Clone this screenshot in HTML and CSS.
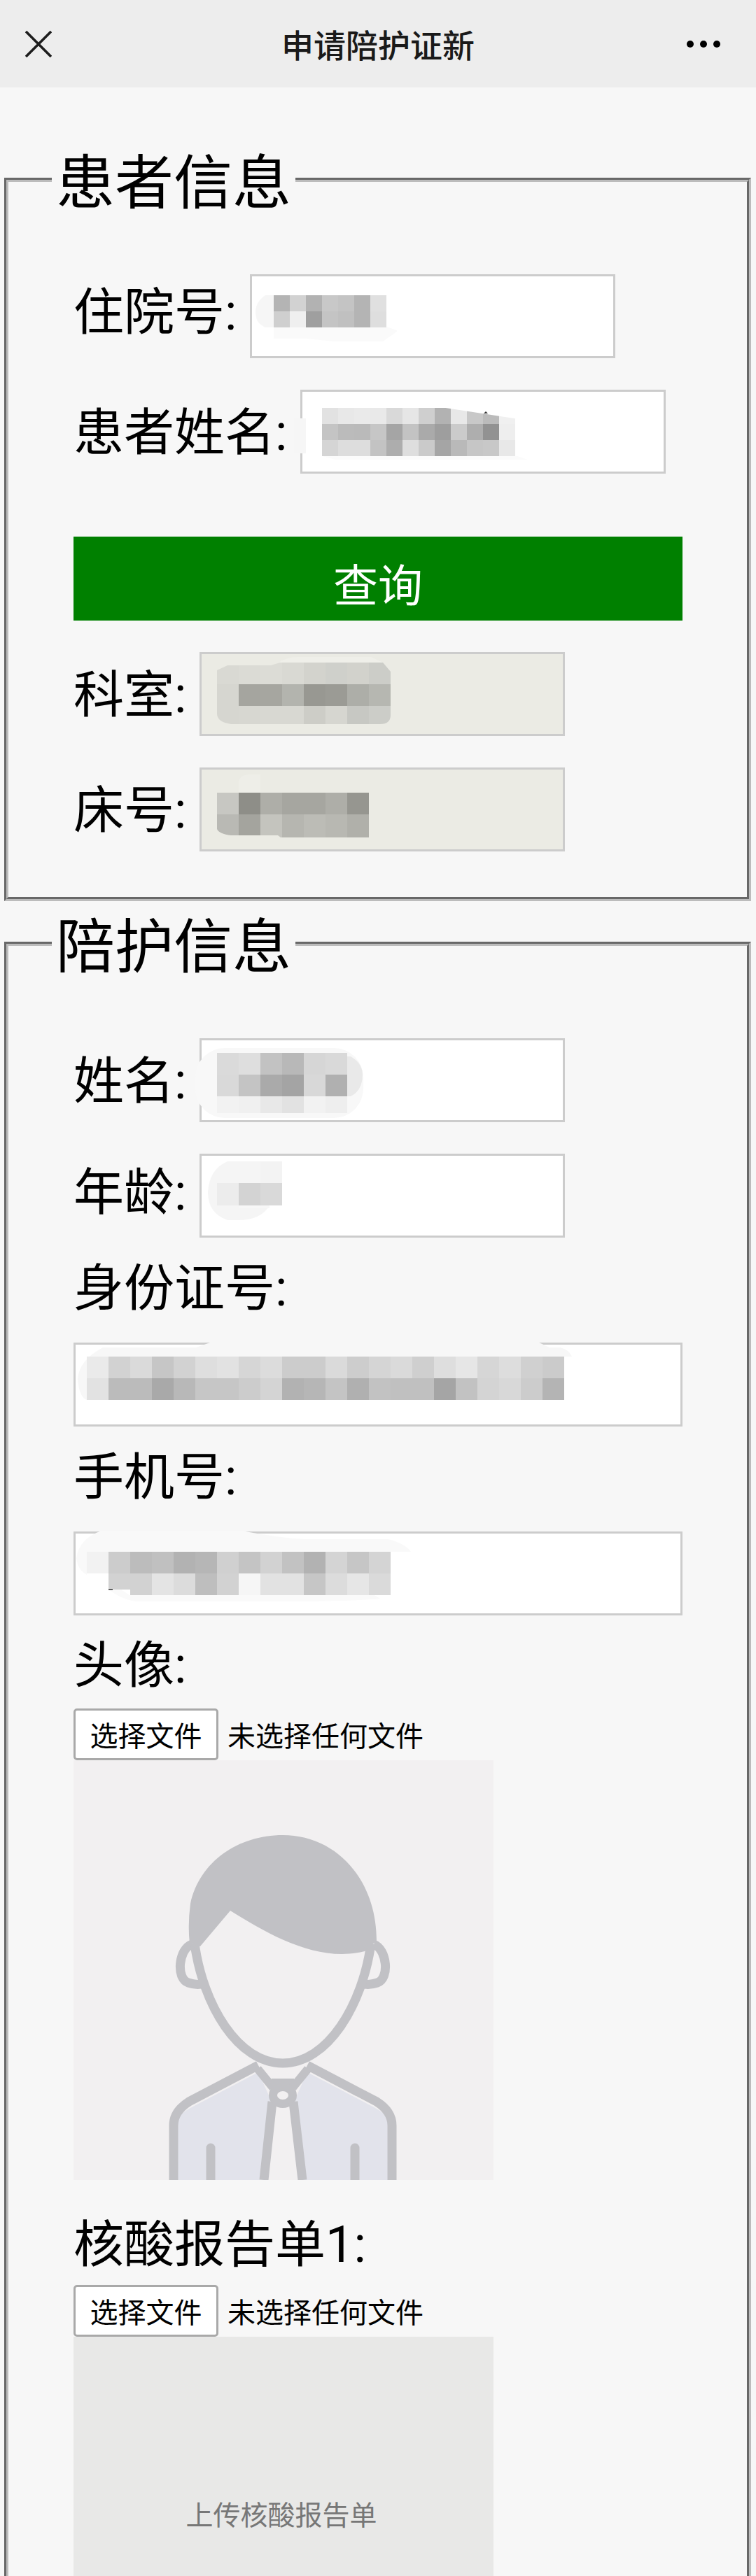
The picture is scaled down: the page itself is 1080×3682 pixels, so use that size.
FILE: index.html
```html
<!DOCTYPE html>
<html lang="zh-CN">
<head>
    <meta charset="UTF-8">
    <meta name="viewport" content="width=device-width, initial-scale=1.0">
    <title>申请陪护证新</title>
    <link rel="stylesheet" href="styles.css">
</head>
<body>

    <header class="topbar">
        <svg class="close-icon" viewBox="0 0 38 38" width="38" height="38">
            <path d="M1 1L37 37M37 1L1 37" fill="none" stroke="#1c1c1c" stroke-width="3.6"/>
        </svg>
        <div class="topbar-title">申请陪护证新</div>
        <svg class="more-icon" viewBox="0 0 48 10" width="48" height="10">
            <circle cx="5" cy="5" r="5"/>
            <circle cx="24" cy="5" r="5"/>
            <circle cx="43" cy="5" r="5"/>
        </svg>
    </header>

    <!-- Patient info -->
    <fieldset class="panel">
        <legend>患者信息</legend>

        <div class="row row-first">
            <label class="label label-up">住院号:</label>
            <div class="input input-wide">
                <svg class="mosaic" viewBox="0 0 522 120">
                    <path d="M34 75H195L210 80V82L190 96H120L80 92H34Z" fill="#fafafa"/>
                    <path d="M34 30H22Q8 40 8 54Q8 70 22 76H34Z" fill="#f6f6f6"/>
                    <rect x="34" y="30" width="23" height="23" fill="#b4b4b4"/>
                    <rect x="57" y="30" width="23" height="23" fill="#d2d2d2"/>
                    <rect x="80" y="30" width="23" height="23" fill="#b2b2b2"/>
                    <rect x="103" y="30" width="23" height="23" fill="#c8c8c8"/>
                    <rect x="126" y="30" width="23" height="23" fill="#c4c4c4"/>
                    <rect x="149" y="30" width="23" height="23" fill="#b4b4b4"/>
                    <rect x="172" y="30" width="23" height="23" fill="#e0e0e0"/>
                    <rect x="34" y="53" width="23" height="23" fill="#cfcfcf"/>
                    <rect x="57" y="53" width="23" height="23" fill="#efefef"/>
                    <rect x="80" y="53" width="23" height="23" fill="#9f9f9f"/>
                    <rect x="103" y="53" width="23" height="23" fill="#c4c4c4"/>
                    <rect x="126" y="53" width="23" height="23" fill="#c0c0c0"/>
                    <rect x="149" y="53" width="23" height="23" fill="#b4b4b4"/>
                    <rect x="172" y="53" width="23" height="23" fill="#dedede"/>
                </svg>
            </div>
        </div>

        <div class="row">
            <label class="label">患者姓名:</label>
            <div class="input input-wide">
                <svg class="mosaic" viewBox="0 0 522 120">
                    <path d="M-9 41H8V91H-9Z" fill="#f6f6f6"/>
                    <path d="M31 95H310L325 100H50Z" fill="#fbfbfb"/>
                    <g fill="#e2e2e2">
                        <rect x="31" y="26" width="23" height="23" fill="#e2e2e2"/>
                        <rect x="54" y="26" width="23" height="23" fill="#e8e8e8"/>
                        <rect x="77" y="26" width="23" height="23" fill="#eaeaea"/>
                        <rect x="100" y="26" width="23" height="23" fill="#e9e9e9"/>
                        <rect x="123" y="26" width="23" height="23" fill="#d9d9d9"/>
                        <rect x="146" y="26" width="23" height="23" fill="#e6e6e6"/>
                        <rect x="169" y="26" width="23" height="23" fill="#cfcfcf"/>
                        <rect x="192" y="26" width="23" height="23" fill="#b2b2b2"/>
                        <rect x="215" y="26" width="23" height="23" fill="#e8e8e8"/>
                        <rect x="238" y="26" width="23" height="23" fill="#c8c8c8"/>
                        <rect x="261" y="26" width="23" height="23" fill="#bbbbbb"/>
                        <rect x="284" y="26" width="23" height="23" fill="#f0f0f0"/>
                        <rect x="31" y="49" width="23" height="23" fill="#c4c4c4"/>
                        <rect x="54" y="49" width="23" height="23" fill="#bbbbbb"/>
                        <rect x="77" y="49" width="23" height="23" fill="#bababa"/>
                        <rect x="100" y="49" width="23" height="23" fill="#c6c6c6"/>
                        <rect x="123" y="49" width="23" height="23" fill="#a5a5a5"/>
                        <rect x="146" y="49" width="23" height="23" fill="#c3c3c3"/>
                        <rect x="169" y="49" width="23" height="23" fill="#aaaaaa"/>
                        <rect x="192" y="49" width="23" height="23" fill="#9e9e9e"/>
                        <rect x="215" y="49" width="23" height="23" fill="#cbcbcb"/>
                        <rect x="238" y="49" width="23" height="23" fill="#aeaeae"/>
                        <rect x="261" y="49" width="23" height="23" fill="#929292"/>
                        <rect x="284" y="49" width="23" height="23" fill="#eeeeee"/>
                        <rect x="31" y="72" width="23" height="23" fill="#d5d5d5"/>
                        <rect x="54" y="72" width="23" height="23" fill="#dddddd"/>
                        <rect x="77" y="72" width="23" height="23" fill="#dddddd"/>
                        <rect x="100" y="72" width="23" height="23" fill="#c3c3c3"/>
                        <rect x="123" y="72" width="23" height="23" fill="#adadad"/>
                        <rect x="146" y="72" width="23" height="23" fill="#dedede"/>
                        <rect x="169" y="72" width="23" height="23" fill="#cacaca"/>
                        <rect x="192" y="72" width="23" height="23" fill="#a5a5a5"/>
                        <rect x="215" y="72" width="23" height="23" fill="#b9b9b9"/>
                        <rect x="238" y="72" width="23" height="23" fill="#c6c6c6"/>
                        <rect x="261" y="72" width="23" height="23" fill="#c8c8c8"/>
                        <rect x="284" y="72" width="23" height="23" fill="#e8e8e8"/>
                    </g>
                    <path d="M206 25.7L307 41.3V25.7Z" fill="#fff"/>
                    <path d="M262 34L265 31L268 34Z" fill="#333"/>
                </svg>
            </div>
        </div>

        <button class="query-btn">查询</button>

        <div class="row">
            <label class="label">科室:</label>
            <div class="input input-disabled">
                <svg class="mosaic" viewBox="0 0 522 120">
                    <defs>
                        <clipPath id="clipDept">
                            <path d="M25 26L40 19H102L115 15H262L273 28V90Q273 103 258 103H45Q25 100 25 88Z"/>
                        </clipPath>
                    </defs>
                    <path d="M113 15Q125 7 140 7H245L262 15Z" fill="#efefe9"/>
                    <g clip-path="url(#clipDept)">
                        <rect x="25" y="15" width="31" height="31" fill="#d9d9d3"/>
                        <rect x="56" y="15" width="31" height="31" fill="#dbdbd5"/>
                        <rect x="87" y="15" width="31" height="31" fill="#dcdcd6"/>
                        <rect x="118" y="15" width="31" height="31" fill="#d9d9d3"/>
                        <rect x="149" y="15" width="31" height="31" fill="#d3d3cd"/>
                        <rect x="180" y="15" width="31" height="31" fill="#cfd0cb"/>
                        <rect x="211" y="15" width="31" height="31" fill="#d2d2cc"/>
                        <rect x="242" y="15" width="31" height="31" fill="#cccdc8"/>
                        <rect x="25" y="46" width="31" height="31" fill="#d6d6d0"/>
                        <rect x="56" y="46" width="31" height="31" fill="#a5a59f"/>
                        <rect x="87" y="46" width="31" height="31" fill="#a6a6a0"/>
                        <rect x="118" y="46" width="31" height="31" fill="#b3b4ae"/>
                        <rect x="149" y="46" width="31" height="31" fill="#989892"/>
                        <rect x="180" y="46" width="31" height="31" fill="#9b9b95"/>
                        <rect x="211" y="46" width="31" height="31" fill="#adaea8"/>
                        <rect x="242" y="46" width="31" height="31" fill="#b6b7b1"/>
                        <rect x="25" y="77" width="31" height="26" fill="#d6d6d0"/>
                        <rect x="56" y="77" width="31" height="26" fill="#d7d7d1"/>
                        <rect x="87" y="77" width="31" height="26" fill="#d8d8d2"/>
                        <rect x="118" y="77" width="31" height="26" fill="#d8d8d2"/>
                        <rect x="149" y="77" width="31" height="26" fill="#cdcdc7"/>
                        <rect x="180" y="77" width="31" height="26" fill="#d6d6d0"/>
                        <rect x="211" y="77" width="31" height="26" fill="#c7c8c3"/>
                        <rect x="242" y="77" width="31" height="26" fill="#cccdc8"/>
                    </g>
                </svg>
            </div>
        </div>

        <div class="row">
            <label class="label">床号:</label>
            <div class="input input-disabled">
                <svg class="mosaic" viewBox="0 0 522 120">
                    <defs>
                        <clipPath id="clipBed">
                            <path d="M25 36H242V100H116L112 97H45Q28 95 25 88Z"/>
                        </clipPath>
                    </defs>
                    <path d="M56 36V20Q58 10 72 10H87V36Z" fill="#eeeee8"/>
                    <g clip-path="url(#clipBed)">
                        <rect x="25" y="36" width="31" height="31" fill="#c7c7c2"/>
                        <rect x="56" y="36" width="31" height="31" fill="#8e8e88"/>
                        <rect x="87" y="36" width="31" height="31" fill="#aeaea8"/>
                        <rect x="118" y="36" width="31" height="31" fill="#a6a6a0"/>
                        <rect x="149" y="36" width="31" height="31" fill="#a6a6a0"/>
                        <rect x="180" y="36" width="31" height="31" fill="#aeaea8"/>
                        <rect x="211" y="36" width="31" height="31" fill="#969690"/>
                        <rect x="25" y="67" width="31" height="33" fill="#b9b9b4"/>
                        <rect x="56" y="67" width="31" height="33" fill="#a4a49e"/>
                        <rect x="87" y="67" width="31" height="33" fill="#c4c4be"/>
                        <rect x="118" y="67" width="31" height="33" fill="#b6b6b0"/>
                        <rect x="149" y="67" width="31" height="33" fill="#bcbcb6"/>
                        <rect x="180" y="67" width="31" height="33" fill="#b8b8b2"/>
                        <rect x="211" y="67" width="31" height="33" fill="#b0b0aa"/>
                    </g>
                </svg>
            </div>
        </div>
    </fieldset>

    <!-- Escort info -->
    <fieldset class="panel panel-second">
        <legend>陪护信息</legend>

        <div class="row row-first">
            <label class="label">姓名:</label>
            <div class="input">
                <svg class="mosaic" viewBox="0 0 522 120">
                    <rect x="-6" y="14" width="240" height="100" rx="42" fill="#f8f8f8"/>
                    <rect x="25" y="21" width="31" height="31" fill="#dadada"/>
                    <rect x="56" y="21" width="31" height="31" fill="#dedede"/>
                    <rect x="87" y="21" width="31" height="31" fill="#c2c2c2"/>
                    <rect x="118" y="21" width="31" height="31" fill="#b8b8b8"/>
                    <rect x="149" y="21" width="31" height="31" fill="#d6d6d6"/>
                    <rect x="180" y="21" width="31" height="31" fill="#d9d9d9"/>
                    <rect x="25" y="52" width="31" height="31" fill="#d9d9d9"/>
                    <rect x="56" y="52" width="31" height="31" fill="#c4c4c4"/>
                    <rect x="87" y="52" width="31" height="31" fill="#aaaaaa"/>
                    <rect x="118" y="52" width="31" height="31" fill="#a4a4a4"/>
                    <rect x="149" y="52" width="31" height="31" fill="#d8d8d8"/>
                    <rect x="180" y="52" width="31" height="31" fill="#b0b0b0"/>
                    <path d="M211 26H216Q233 36 233 52Q233 75 216 83H211Z" fill="#e9e9e9"/>
                    <rect x="25" y="83" width="31" height="24" fill="#f2f2f2"/>
                    <rect x="56" y="83" width="31" height="24" fill="#f0f0f0"/>
                    <rect x="87" y="83" width="31" height="24" fill="#e8e8e8"/>
                    <rect x="118" y="83" width="31" height="24" fill="#e2e2e2"/>
                    <rect x="149" y="83" width="31" height="24" fill="#f2f2f2"/>
                    <rect x="180" y="83" width="31" height="24" fill="#eeeeee"/>
                </svg>
            </div>
        </div>

        <div class="row row-age">
            <label class="label label-age">年龄:</label>
            <div class="input">
                <svg class="mosaic" viewBox="0 0 522 120">
                    <path d="M40 11H118V74H100Q88 95 55 95H40Q12 85 12 55Q14 22 40 11Z" fill="#f5f5f5"/>
                    <rect x="87" y="11" width="31" height="31" fill="#f3f3f3"/>
                    <rect x="25" y="42" width="31" height="32" fill="#ececec"/>
                    <rect x="56" y="42" width="31" height="32" fill="#d3d3d3"/>
                    <rect x="87" y="42" width="31" height="32" fill="#d9d9d9"/>
                    <rect x="56" y="74" width="44" height="4" fill="#f7f7f7"/>
                </svg>
            </div>
        </div>

        <label class="label label-block">身份证号:</label>
        <div class="input input-full">
            <svg class="mosaic" viewBox="0 0 870 120">
                <path d="M198 -1H663L680 7H695Q708 10 712 20H19V82Q8 78 6 52Q8 25 42 7H175Z" fill="#f7f7f7"/>
                <rect x="19" y="20" width="31" height="31" fill="#eaeaea"/>
                <rect x="50" y="20" width="31" height="31" fill="#d2d2d2"/>
                <rect x="81" y="20" width="31" height="31" fill="#dadada"/>
                <rect x="112" y="20" width="31" height="31" fill="#c6c6c6"/>
                <rect x="143" y="20" width="31" height="31" fill="#d2d2d2"/>
                <rect x="174" y="20" width="31" height="31" fill="#dedede"/>
                <rect x="205" y="20" width="31" height="31" fill="#e2e2e2"/>
                <rect x="236" y="20" width="31" height="31" fill="#d6d6d6"/>
                <rect x="267" y="20" width="31" height="31" fill="#dcdcdc"/>
                <rect x="298" y="20" width="31" height="31" fill="#cccccc"/>
                <rect x="329" y="20" width="31" height="31" fill="#cccccc"/>
                <rect x="360" y="20" width="31" height="31" fill="#dadada"/>
                <rect x="391" y="20" width="31" height="31" fill="#cdcdcd"/>
                <rect x="422" y="20" width="31" height="31" fill="#d5d5d5"/>
                <rect x="453" y="20" width="31" height="31" fill="#dadada"/>
                <rect x="484" y="20" width="31" height="31" fill="#cfcfcf"/>
                <rect x="515" y="20" width="31" height="31" fill="#dedede"/>
                <rect x="546" y="20" width="31" height="31" fill="#e6e6e6"/>
                <rect x="577" y="20" width="31" height="31" fill="#d6d6d6"/>
                <rect x="608" y="20" width="31" height="31" fill="#dddddd"/>
                <rect x="639" y="20" width="31" height="31" fill="#d0d0d0"/>
                <rect x="670" y="20" width="31" height="31" fill="#cbcbcb"/>
                <rect x="19" y="51" width="31" height="31" fill="#e2e2e2"/>
                <rect x="50" y="51" width="31" height="31" fill="#bbbbbb"/>
                <rect x="81" y="51" width="31" height="31" fill="#bbbbbb"/>
                <rect x="112" y="51" width="31" height="31" fill="#a9a9a9"/>
                <rect x="143" y="51" width="31" height="31" fill="#b8b8b8"/>
                <rect x="174" y="51" width="31" height="31" fill="#c6c6c6"/>
                <rect x="205" y="51" width="31" height="31" fill="#c6c6c6"/>
                <rect x="236" y="51" width="31" height="31" fill="#cccccc"/>
                <rect x="267" y="51" width="31" height="31" fill="#d4d4d4"/>
                <rect x="298" y="51" width="31" height="31" fill="#b2b2b2"/>
                <rect x="329" y="51" width="31" height="31" fill="#b6b6b6"/>
                <rect x="360" y="51" width="31" height="31" fill="#c4c4c4"/>
                <rect x="391" y="51" width="31" height="31" fill="#b0b0b0"/>
                <rect x="422" y="51" width="31" height="31" fill="#c2c2c2"/>
                <rect x="453" y="51" width="31" height="31" fill="#c0c0c0"/>
                <rect x="484" y="51" width="31" height="31" fill="#c0c0c0"/>
                <rect x="515" y="51" width="31" height="31" fill="#a5a5a5"/>
                <rect x="546" y="51" width="31" height="31" fill="#c2c2c2"/>
                <rect x="577" y="51" width="31" height="31" fill="#d4d4d4"/>
                <rect x="608" y="51" width="31" height="31" fill="#d8d8d8"/>
                <rect x="639" y="51" width="31" height="31" fill="#cccccc"/>
                <rect x="670" y="51" width="31" height="31" fill="#b4b4b4"/>
            </svg>
        </div>

        <label class="label label-block">手机号:</label>
        <div class="input input-full">
            <svg class="mosaic" viewBox="0 0 870 120">
                <path d="M40 -1H240Q300 10 330 11H450Q475 18 482 29H19V62Q6 55 4 38Q8 10 40 -1Z" fill="#f9f9f9"/>
                <path d="M50 83H68L80 91H430L438 96Q400 100 300 100H90Q70 98 50 83Z" fill="#fafafa"/>
                <rect x="19" y="29" width="31" height="31" fill="#f2f2f2"/>
                <rect x="50" y="29" width="31" height="31" fill="#cccccc"/>
                <rect x="81" y="29" width="31" height="31" fill="#bcbcbc"/>
                <rect x="112" y="29" width="31" height="31" fill="#c0c0c0"/>
                <rect x="143" y="29" width="31" height="31" fill="#b2b2b2"/>
                <rect x="174" y="29" width="31" height="31" fill="#b6b6b6"/>
                <rect x="205" y="29" width="31" height="31" fill="#d0d0d0"/>
                <rect x="236" y="29" width="31" height="31" fill="#c4c4c4"/>
                <rect x="267" y="29" width="31" height="31" fill="#d2d2d2"/>
                <rect x="298" y="29" width="31" height="31" fill="#c2c2c2"/>
                <rect x="329" y="29" width="31" height="31" fill="#b2b2b2"/>
                <rect x="360" y="29" width="31" height="31" fill="#d4d4d4"/>
                <rect x="391" y="29" width="31" height="31" fill="#c6c6c6"/>
                <rect x="422" y="29" width="31" height="31" fill="#d4d4d4"/>
                <rect x="50" y="60" width="31" height="23" fill="#d2d2d2"/>
                <rect x="81" y="60" width="31" height="31" fill="#d2d2d2"/>
                <rect x="112" y="60" width="31" height="31" fill="#e4e4e4"/>
                <rect x="143" y="60" width="31" height="31" fill="#dcdcdc"/>
                <rect x="174" y="60" width="31" height="31" fill="#bebebe"/>
                <rect x="205" y="60" width="31" height="31" fill="#d2d2d2"/>
                <rect x="236" y="60" width="31" height="31" fill="#f6f6f6"/>
                <rect x="267" y="60" width="31" height="31" fill="#e2e2e2"/>
                <rect x="298" y="60" width="31" height="31" fill="#e2e2e2"/>
                <rect x="329" y="60" width="31" height="31" fill="#c6c6c6"/>
                <rect x="360" y="60" width="31" height="31" fill="#dcdcdc"/>
                <rect x="391" y="60" width="31" height="31" fill="#e6e6e6"/>
                <rect x="422" y="60" width="31" height="31" fill="#dadada"/>
                <rect x="50" y="82" width="6" height="1.5" fill="#333"/>
            </svg>
        </div>

        <label class="label label-block label-short">头像:</label>
        <div class="file-row">
            <button class="file-btn">选择文件</button>
            <span class="file-name">未选择任何文件</span>
        </div>
        <div class="avatar">
            <svg viewBox="0 0 600 600" width="600" height="600">
                <!-- shirt -->
                <path d="M264 446L167 497Q143 510 143 528V600H271L284 490ZM334 446L431 497Q455 510 455 528V600H327L314 490Z" fill="#e2e3eb"/>
                <g fill="none" stroke="#c1c1c5" stroke-width="13">
                    <!-- ears -->
                    <path d="M169 263C150 270 146 312 164 318C170 320 176 321 182 320"/>
                    <path d="M429 263C448 270 452 312 434 318C428 320 422 321 416 320"/>
                    <!-- face -->
                    <path d="M173 262C185 350 235 433 299 433C363 433 413 350 425 262"/>
                    <!-- shoulders -->
                    <path d="M264 436L165 488Q143 502 143 522V600"/>
                    <path d="M334 436L433 488Q455 502 455 522V600"/>
                    <!-- collar -->
                    <path d="M263 441L285 468M335 441L313 468M283 461H315" stroke-width="12"/>
                    <!-- tie -->
                    <ellipse cx="299" cy="479" rx="14" ry="12" stroke-width="12"/>
                    <path d="M284 488L272 600M314 488L327 600"/>
                    <!-- arms -->
                    <path d="M196 600V554M402 600V554" stroke-linecap="round"/>
                </g>
                <!-- hair -->
                <path d="M166 262Q163 235 167 205C180 145 235 107 299 107C375 107 433 170 433 258L416 273C350 290 280 250 224 215L181 266Z" fill="#c1c1c5"/>
            </svg>
        </div>

        <label class="label label-block label-report">核酸报告单1:</label>
        <div class="file-row">
            <button class="file-btn">选择文件</button>
            <span class="file-name">未选择任何文件</span>
        </div>
        <div class="report-img">上传核酸报告单</div>
    </fieldset>

</body>
</html>
```

FILE: styles.css
```css
html,
body {
    margin: 0;
    padding: 0;
    height: 3682px;
    overflow: hidden;
}

body {
    background-color: #f7f7f7;
    color: #000;
    font-family: Roboto, "Noto Sans CJK SC", sans-serif;
}

.topbar {
    display: grid;
    grid-template-columns: 1fr auto 1fr;
    align-items: center;
    height: 125px;
    background-color: #ededed;
}

.close-icon {
    justify-self: start;
    margin-left: 36px;
}

.more-icon {
    justify-self: end;
    margin-right: 51px;
}

.topbar-title {
    margin-bottom: 2px;
    font-size: 46px;
    font-weight: 500;
    color: #1a1a1a;
}

.panel {
    margin: 78px 7px 0 6px;
    padding: 0 92px 65px 93px;
    min-width: 0;
    border: 6px groove #bcbcbc;
}

.panel-second {
    margin-top: 7px;
}

.panel legend {
    margin-left: -31px;
    padding: 12px 6px 0;
    font-size: 84px;
    line-height: 96px;
}

.row {
    display: flex;
    align-items: center;
    margin-top: 45px;
}

.row-first {
    margin-top: 81px;
}

.label {
    font-size: 72px;
    line-height: 96px;
    margin-right: 18.5px;
}

.row .label {
    padding-top: 4px;
}

.row .label-up {
    margin-top: -14px;
}

.row .label-age {
    margin-top: -12px;
}

.label-block {
    display: block;
    margin: 25px 0 29px;
}

.label-short {
    margin: 24px 0 13px;
}

.label-report {
    margin: 45px 0 9px;
}

.input {
    position: relative;
    box-sizing: border-box;
    width: 522px;
    height: 120px;
    background-color: #fff;
    border: 3px solid #cccccc;
}

.input-full {
    width: 870px;
}

.input-disabled {
    background-color: #ebebe4;
}

/* blurred-out values sit on top of the field */
.mosaic {
    position: absolute;
    top: -3px;
    left: -3px;
    width: calc(100% + 6px);
    height: 120px;
    overflow: visible;
}

.query-btn {
    display: block;
    width: 100%;
    height: 120px;
    margin-top: 90px;
    margin-bottom: 45px;
    padding: 9px 0 0;
    background-color: #008000;
    color: #fff;
    border: none;
    font-family: inherit;
    font-size: 64px;
}

.query-btn + .row {
    margin-top: 0;
}

.file-row {
    display: flex;
    align-items: center;
    gap: 13px;
    height: 74px;
}

.file-btn {
    box-sizing: border-box;
    width: 207px;
    height: 74px;
    padding: 0;
    background-color: #fff;
    color: #000;
    border: 3px solid #a9a9a9;
    border-radius: 5px;
    font-family: inherit;
    font-size: 40px;
}

.file-name {
    font-size: 40px;
}

.avatar {
    width: 600px;
    height: 600px;
    background-color: #f2f0f1;
}

.avatar svg {
    display: block;
}

.report-img {
    box-sizing: border-box;
    width: 600px;
    height: 600px;
    padding: 227px 6px 0 0;
    background-color: #e8e8e7;
    color: #777777;
    font-size: 39px;
    line-height: 58px;
    text-align: center;
}
```
